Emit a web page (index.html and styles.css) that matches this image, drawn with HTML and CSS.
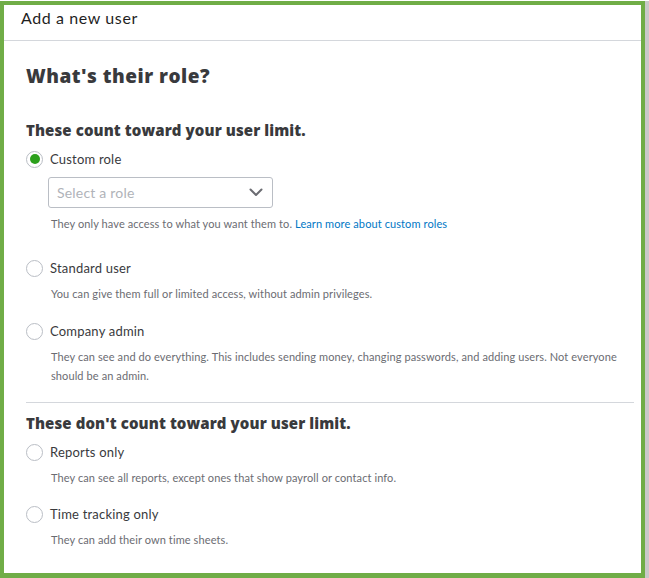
FILE: index.html
```html
<!DOCTYPE html>
<html>
<head>
<meta charset="utf-8">
<link rel="stylesheet" href="styles.css">
</head>
<body>
<div class="page">
  <div class="frame">
    <div class="header">Add a new user</div>
    <div class="content">
      <h1 class="title">What's their role?</h1>
      <h2 class="section">These count toward your user limit.</h2>

      <div class="option">
        <div class="row"><span class="radio checked"></span><span class="label">Custom role</span></div>
        <div class="select">
          <span class="placeholder">Select a role</span>
          <svg class="chev" width="14" height="9" viewBox="0 0 14 9"><path d="M1.5 1.5 L7 7 L12.5 1.5" fill="none" stroke="#6b6c72" stroke-width="2" stroke-linecap="round" stroke-linejoin="round"/></svg>
        </div>
        <p class="help">They only have access to what you want them to. <span class="link">Learn more about custom roles</span></p>
      </div>

      <div class="option gap-lg">
        <div class="row"><span class="radio"></span><span class="label">Standard user</span></div>
        <p class="help">You can give them full or limited access, without admin privileges.</p>
      </div>

      <div class="option">
        <div class="row"><span class="radio"></span><span class="label">Company admin</span></div>
        <p class="help">They can see and do everything. This includes sending money, changing passwords, and adding users. Not everyone should be an admin.</p>
      </div>

      <hr class="divider">

      <h2 class="section second">These don't count toward your user limit.</h2>

      <div class="option first">
        <div class="row"><span class="radio"></span><span class="label">Reports only</span></div>
        <p class="help">They can see all reports, except ones that show payroll or contact info.</p>
      </div>

      <div class="option last">
        <div class="row"><span class="radio"></span><span class="label">Time tracking only</span></div>
        <p class="help">They can add their own time sheets.</p>
      </div>
    </div>
  </div>
  <div class="strip"></div>
</div>
</body>
</html>
```

FILE: styles.css
```css
html, body {
  margin: 0;
  padding: 0;
  background: #ffffff;
}
body {
  font-family: "Lato", "Open Sans", "DejaVu Sans", sans-serif;
  color: #393a3d;
}
.page {
  display: flex;
  height: 578px;
  padding-top: 1px;
  box-sizing: border-box;
}
.frame {
  width: 645px;
  height: 577px;
  box-sizing: border-box;
  border: 4px solid #70ad47;
  border-bottom-width: 5px;
  background: #fff;
  display: flex;
  flex-direction: column;
}
.strip {
  width: 4px;
  height: 577px;
  background: #c9c9c9;
}
.header {
  height: 36px;
  box-sizing: border-box;
  border-bottom: 1px solid #d4d7dc;
  padding-left: 17px;
  padding-top: 3px;
  font-size: 16px;
  line-height: 20px;
  color: #1f1f1f;
  letter-spacing: 0.6px;
}
.content {
  padding: 0 7px 0 22px;
  display: flex;
  flex-direction: column;
}
.title {
  margin: 23px 0 0 0;
  font-family: "Open Sans", "Lato", sans-serif;
  font-size: 19px;
  line-height: 24px;
  font-weight: 800;
  color: #393a3d;
  letter-spacing: 0.5px;
}
.section {
  margin: 32px 0 0 0;
  font-family: "Open Sans", "Lato", sans-serif;
  font-size: 15px;
  line-height: 20px;
  font-weight: 800;
  color: #393a3d;
  letter-spacing: 0.1px;
}
.section.second {
  margin-top: 10px;
}
.option {
  margin-top: 18px;
  display: flex;
  flex-direction: column;
}
.content > .section + .option {
  margin-top: 9px;
}
.option.first {
  margin-top: 10px;
}
.option.last {
  margin-top: 17px;
}
.option.gap-lg {
  margin-top: 25px;
}
.row {
  display: flex;
  align-items: center;
  height: 20px;
}
.radio {
  width: 17px;
  height: 17px;
  box-sizing: border-box;
  border: 1px solid #babec5;
  border-radius: 50%;
  background: #fff;
  display: flex;
  align-items: center;
  justify-content: center;
}
.radio.checked::after {
  content: "";
  width: 10px;
  height: 10px;
  border-radius: 50%;
  background: #2ca01c;
}
.label {
  margin-left: 7px;
  font-size: 13px;
  color: #393a3d;
  letter-spacing: 0.2px;
}
.select {
  margin: 8px 0 0 22px;
  width: 225px;
  height: 31px;
  box-sizing: border-box;
  border: 1px solid #babec5;
  border-radius: 3px;
  display: flex;
  align-items: center;
  justify-content: space-between;
  padding: 0 9px 0 8px;
}
.placeholder {
  font-size: 14px;
  color: #b0b3b9;
  letter-spacing: 0.2px;
}
.chev {
  display: block;
}
.help {
  margin: 6px 0 0 25px;
  font-size: 11px;
  line-height: 19px;
  color: #6b6c72;
  letter-spacing: 0.1px;
}
.link {
  color: #0077c5;
}
.divider {
  margin: 17px 0 0 0;
  border: 0;
  border-top: 1px solid #d4d7dc;
  height: 0;
}
```
